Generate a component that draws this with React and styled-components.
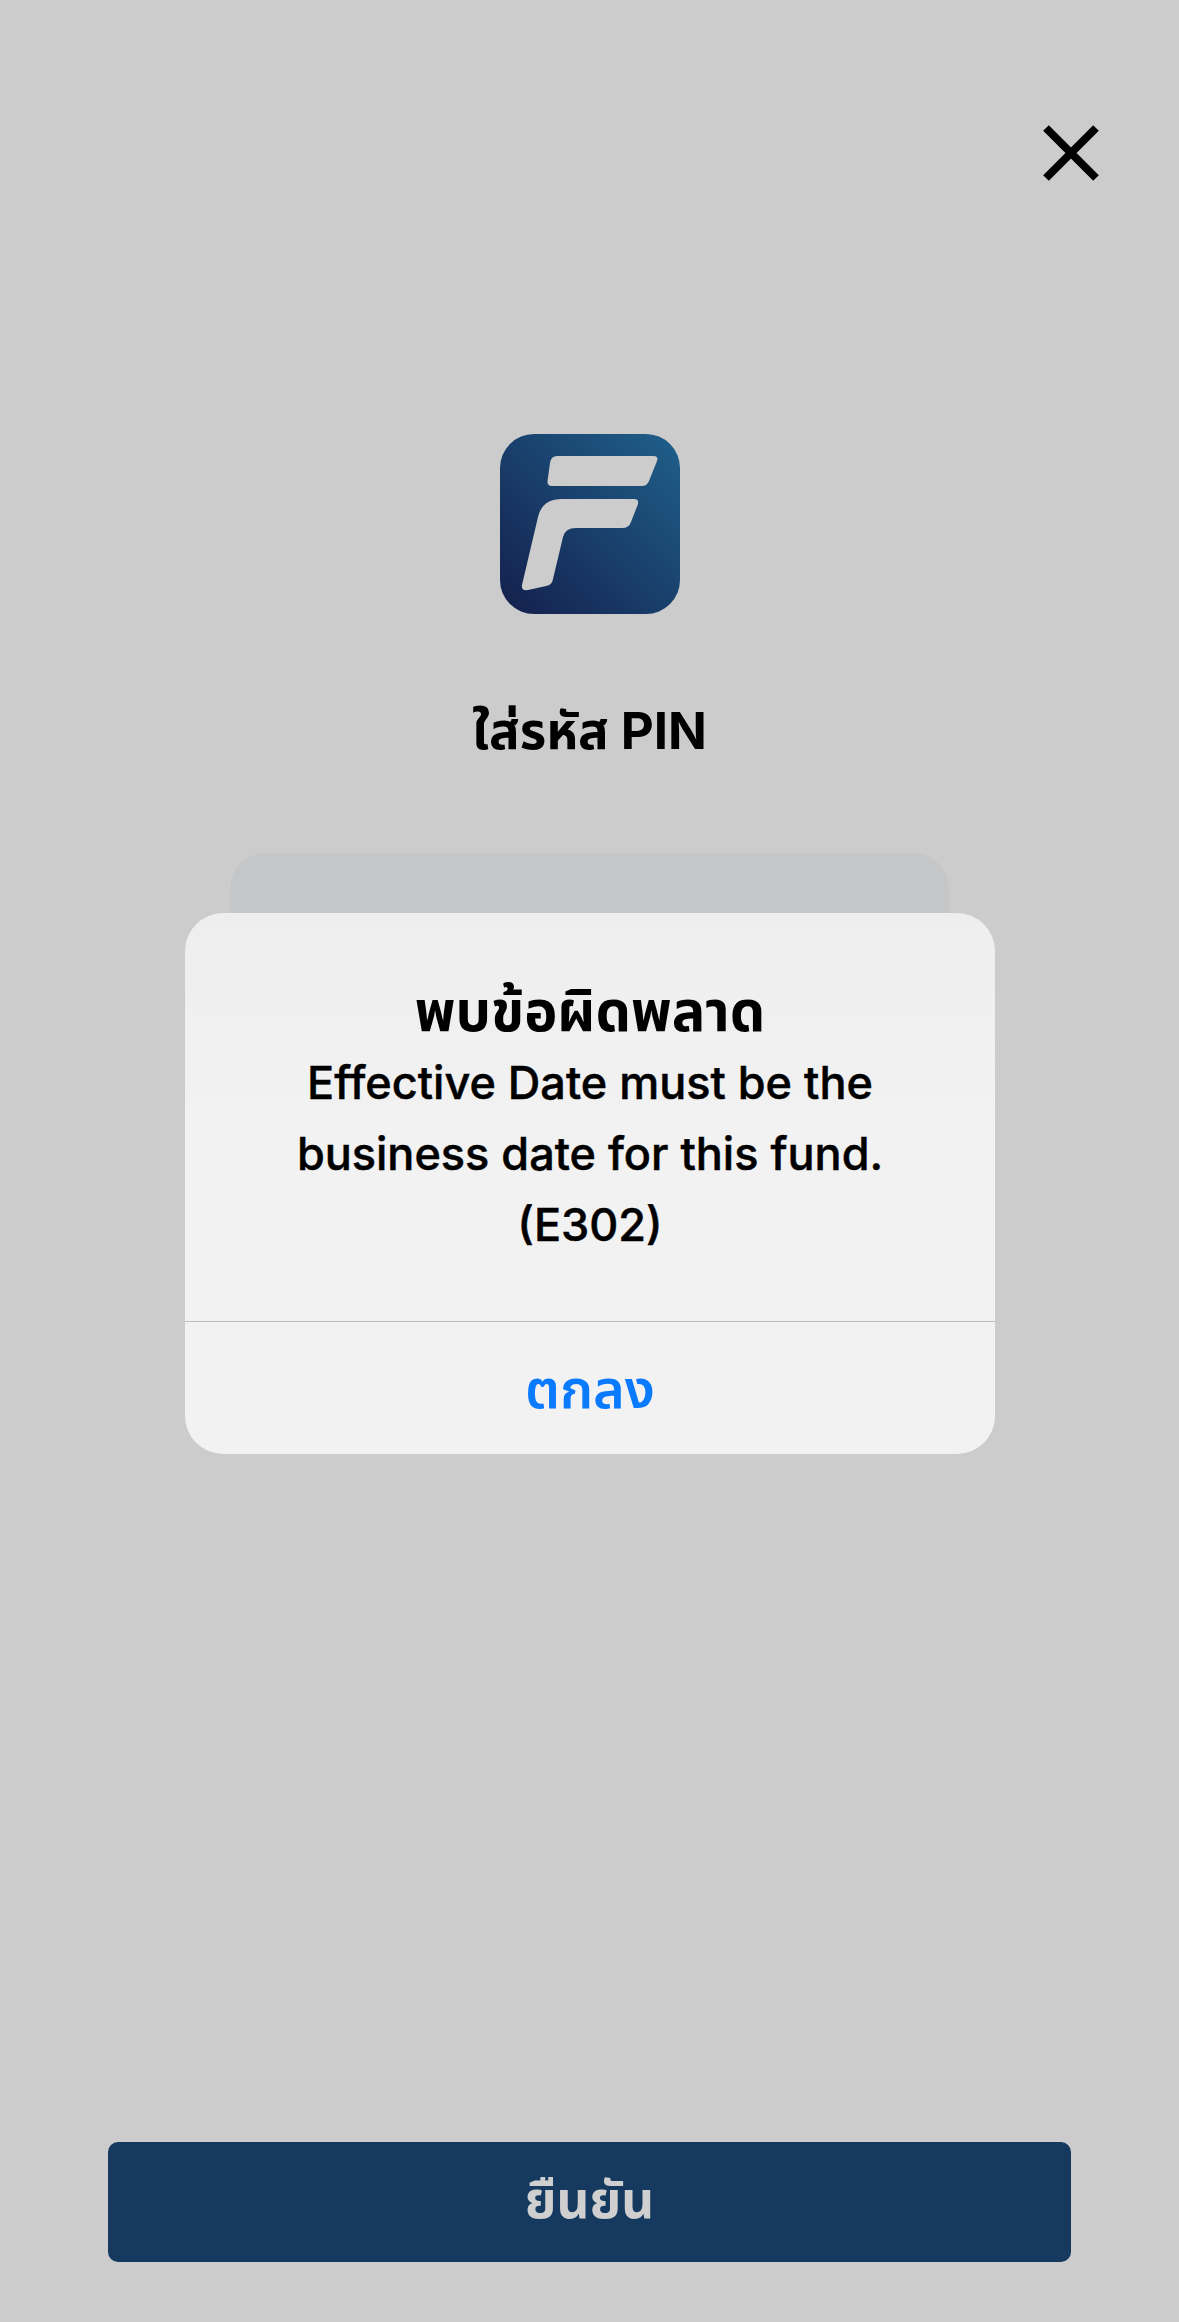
import React from 'react'
import styled, { createGlobalStyle } from 'styled-components'

const GlobalStyle = createGlobalStyle`
  html, body {
    margin: 0;
    padding: 0;
    background: #cccccc;
  }
  * {
    box-sizing: border-box;
  }
`

const FONT = `Inter, "Noto Sans", "Noto Sans Thai", "DejaVu Sans", sans-serif`

const Page = styled.div`
  position: relative;
  width: 1179px;
  height: 2322px;
  display: flex;
  flex-direction: column;
  align-items: center;
  background: #cccccc;
  font-family: ${FONT};
  overflow: hidden;
`

const TopBar = styled.div`
  width: 100%;
  height: 434px;
  display: flex;
  justify-content: flex-end;
  padding: 125px 80px 0 0;
`

const CloseButton = styled.button`
  width: 56px;
  height: 56px;
  padding: 0;
  border: 0;
  background: none;
  svg {
    display: block;
  }
`

const Logo = styled.svg`
  width: 180px;
  height: 180px;
  flex: none;
`

const Title = styled.h1`
  margin: 87px 0 0;
  height: 60px;
  font-size: 51px;
  line-height: 60px;
  font-weight: 700;
  color: #000;
`

const PinCard = styled.div`
  margin-top: 92px;
  width: 719px;
  height: 200px;
  background: #c5c6c8;
  border-radius: 36px;
`

const Footer = styled.div`
  margin-top: auto;
  width: 100%;
  padding: 0 108px 60px;
`

const ConfirmButton = styled.button`
  width: 100%;
  height: 120px;
  border: 0;
  border-radius: 10px;
  background: #163a5f;
  color: #cfcfcf;
  font-family: ${FONT};
  font-size: 51px;
  font-weight: 700;
`

const Alert = styled.div`
  position: absolute;
  top: 913px;
  left: 185px;
  width: 810px;
  height: 541px;
  display: flex;
  flex-direction: column;
  background: linear-gradient(180deg, #eeeeee 0%, #f2f2f2 40%);
  border-radius: 38px;
  overflow: hidden;
`

const AlertBody = styled.div`
  height: 409px;
  padding-top: 62px;
  text-align: center;
  color: #000;
  border-bottom: 1px solid #bcbcbc;
`

const AlertTitle = styled.div`
  font-size: 56px;
  line-height: 72px;
  font-weight: 700;
`

const AlertMessage = styled.div`
  font-size: 45px;
  line-height: 71px;
  font-weight: 500;
  -webkit-text-stroke: 0.5px #000;
`

const AlertAction = styled.button`
  flex: 1;
  padding: 6px 0 0;
  border: 0;
  background: none;
  color: #0a7aff;
  font-family: ${FONT};
  font-size: 54px;
  font-weight: 600;
`

const App = () => {
  return (
    <Page>
      <GlobalStyle />
      <TopBar>
        <CloseButton aria-label="close">
          <svg width="56" height="56" viewBox="0 0 56 56">
            <path d="M3 3 L53 53 M53 3 L3 53" stroke="#000" strokeWidth="8" fill="none" />
          </svg>
        </CloseButton>
      </TopBar>
      <Logo viewBox="0 0 180 180">
        <defs>
          <linearGradient id="logoFill" x1="0" y1="1" x2="1" y2="0">
            <stop offset="0" stopColor="#141f4c" />
            <stop offset="1" stopColor="#1f608b" />
          </linearGradient>
        </defs>
        <rect width="180" height="180" rx="34" fill="url(#logoFill)" />
        <path
          fill="#cccccc"
          d="M57 22 L153 22 Q159 22 157 27 L149 47 Q147 52 142 52 L52 52 Q47 52 47.500 47 L50 29 Q51 22 57 22 Z"
        />
        <path
          fill="#cccccc"
          d="M62 65 L134 65 Q139 65 138 70 L131 88 Q129 94 122 94 L76 94 Q65 94 63 103 L53 145 Q52 151 46 152 L28 156 Q21 157 22 151 L38 83 Q42 65 62 65 Z"
        />
      </Logo>
      <Title>ใส่รหัส PIN</Title>
      <PinCard />
      <Footer>
        <ConfirmButton>ยืนยัน</ConfirmButton>
      </Footer>
      <Alert>
        <AlertBody>
          <AlertTitle>พบข้อผิดพลาด</AlertTitle>
          <AlertMessage>
            Effective Date must be the
            <br />
            business date for this fund.
            <br />
            (E302)
          </AlertMessage>
        </AlertBody>
        <AlertAction>ตกลง</AlertAction>
      </Alert>
    </Page>
  )
}

export default App
